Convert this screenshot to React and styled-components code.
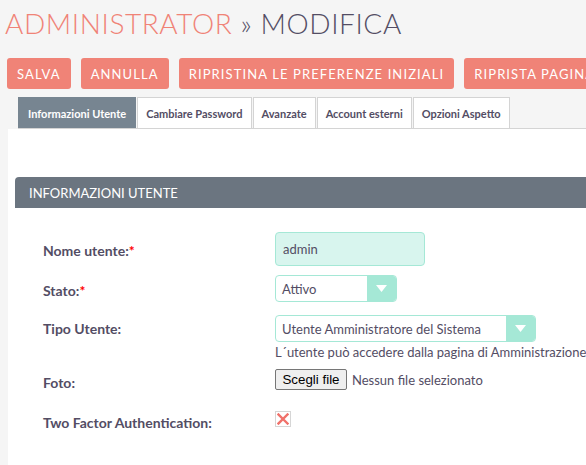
import React from "react";
import styled, { createGlobalStyle } from "styled-components";

const Global = createGlobalStyle`
  html, body { margin: 0; padding: 0; background: #f5f5f5; overflow: hidden; }
  body { font-family: Lato, "Open Sans", sans-serif; color: #534d64; }
`;

const Page = styled.div`
  width: 586px;
  height: 465px;
  display: flex;
  flex-direction: column;
  overflow: hidden;
`;

const Title = styled.h1`
  margin: 0;
  padding: 6px 0 0 5px;
  height: 52px;
  box-sizing: border-box;
  font-size: 28px;
  line-height: 34px;
  font-weight: 300;
  letter-spacing: 0.6px;
  white-space: nowrap;
  color: #534d64;
`;

const Module = styled.span`
  color: #f08377;
`;

const ButtonBar = styled.div`
  display: flex;
  gap: 10px;
  padding-left: 7px;
  height: 31px;
  margin-top: 6px;
`;

const ActionButton = styled.button`
  flex-shrink: 0;
  height: 31px;
  padding: 0 10px;
  border: none;
  border-radius: 3px;
  background: #f08377;
  color: #fff;
  font-family: Lato, sans-serif;
  font-size: 13px;
  letter-spacing: 1.1px;
  white-space: nowrap;
  text-transform: uppercase;
`;

const TabList = styled.div`
  display: flex;
  gap: 1px;
  margin: 8px 0 0 18px;
  height: 31px;
  border-bottom: 1px solid #d4d4d4;
`;

const Tab = styled.div`
  display: flex;
  align-items: center;
  padding: 0 ${(p) => (p.$active ? 9 : 8)}px;
  box-sizing: border-box;
  height: 31px;
  font-size: 11px;
  font-weight: 700;
  white-space: nowrap;
  background: ${(p) => (p.$active ? "#778591" : "#fff")};
  color: ${(p) => (p.$active ? "#fff" : "#534d64")};
  border: 1px solid ${(p) => (p.$active ? "#778591" : "#d4d4d4")};
  border-bottom: none;
`;

const Panel = styled.div`
  flex: 1;
  margin-left: 8px;
  background: #fff;
  padding-top: 48px;
`;

const PanelHeader = styled.div`
  margin-left: 7px;
  height: 31px;
  display: flex;
  align-items: center;
  padding-left: 14px;
  background: #6b7580;
  border-top-left-radius: 4px;
  color: #fff;
  font-size: 13px;
  white-space: nowrap;
`;

const Form = styled.div`
  padding: 24px 0 0 35px;
  display: flex;
  flex-direction: column;
`;

const Row = styled.div`
  display: grid;
  grid-template-columns: 232px auto;
  align-items: start;
  margin-top: ${(p) => p.$mt || 0}px;
`;

const Label = styled.div`
  padding-top: ${(p) => p.$pt}px;
  font-size: 14px;
  line-height: 16px;
  font-weight: 700;
  color: #534d64;
  white-space: nowrap;
`;

const Req = styled.span`
  color: #ff0000;
`;

const Value = styled.div`
  display: flex;
  flex-direction: column;
  white-space: nowrap;
`;

const TextInput = styled.div`
  width: 150px;
  height: 34px;
  box-sizing: border-box;
  padding-left: 7px;
  display: flex;
  align-items: center;
  background: #d8f5ee;
  border: 1px solid #a5e8d6;
  border-radius: 4px;
  font-size: 13px;
  color: #534d64;
`;

const Select = styled.div`
  width: ${(p) => p.$w}px;
  height: 27px;
  box-sizing: border-box;
  display: flex;
  border: 1px solid #a5e8d6;
  border-radius: 4px;
  overflow: hidden;
  background: #fff;
`;

const SelectText = styled.div`
  flex: 1;
  display: flex;
  align-items: center;
  padding-left: 6px;
  font-size: 13px;
  color: #534d64;
`;

const Arrow = styled.div`
  width: 29px;
  background: #a5e8d6;
  display: flex;
  align-items: center;
  justify-content: center;
`;

const Help = styled.div`
  font-size: 13px;
  line-height: 18px;
  margin-top: 1px;
  color: #534d64;
`;

const FileRow = styled.div`
  display: flex;
  align-items: center;
  gap: 5px;
  font-size: 13px;
  color: #534d64;
`;

const FileButton = styled.button`
  height: 21px;
  width: 72px;
  padding: 0;
  background: #efefef;
  border: 1px solid #767676;
  border-radius: 2px;
  font-family: "Liberation Sans", Arial, sans-serif;
  font-size: 13.33px;
  color: #000;
`;

const CheckBox = styled.div`
  width: 16px;
  height: 16px;
  box-sizing: border-box;
  border: 1px solid #d6d6d6;
  display: flex;
  align-items: center;
  justify-content: center;
  background: #fff;
`;

const Triangle = () => (
  <svg width="11" height="7" viewBox="0 0 11 7">
    <polygon points="0,0 11,0 5.5,7" fill="#fff" />
  </svg>
);

const Cross = () => (
  <svg width="12" height="12" viewBox="0 0 12 12">
    <path d="M1.5 1.5 L10.5 10.5 M10.5 1.5 L1.5 10.5" stroke="#f0716a" strokeWidth="2.4" strokeLinecap="square" />
  </svg>
);

export default function App() {
  return (
    <Page>
      <Global />
      <Title>
        <Module>ADMINISTRATOR</Module> » MODIFICA
      </Title>
      <ButtonBar>
        <ActionButton>Salva</ActionButton>
        <ActionButton>Annulla</ActionButton>
        <ActionButton>Ripristina le preferenze iniziali</ActionButton>
        <ActionButton>Riprista pagina iniziale</ActionButton>
      </ButtonBar>
      <TabList>
        <Tab $active>Informazioni Utente</Tab>
        <Tab>Cambiare Password</Tab>
        <Tab>Avanzate</Tab>
        <Tab>Account esterni</Tab>
        <Tab>Opzioni Aspetto</Tab>
      </TabList>
      <Panel>
        <PanelHeader>INFORMAZIONI UTENTE</PanelHeader>
        <Form>
          <Row>
            <Label $pt={11}>Nome utente:<Req>*</Req></Label>
            <Value>
              <TextInput>admin</TextInput>
            </Value>
          </Row>
          <Row $mt={9}>
            <Label $pt={8}>Stato:<Req>*</Req></Label>
            <Value>
              <Select $w={122}>
                <SelectText>Attivo</SelectText>
                <Arrow><Triangle /></Arrow>
              </Select>
            </Value>
          </Row>
          <Row $mt={13}>
            <Label $pt={6}>Tipo Utente:</Label>
            <Value>
              <Select $w={261}>
                <SelectText>Utente Amministratore del Sistema</SelectText>
                <Arrow><Triangle /></Arrow>
              </Select>
              <Help>L´utente può accedere dalla pagina di Amministrazione</Help>
            </Value>
          </Row>
          <Row $mt={8}>
            <Label $pt={6}>Foto:</Label>
            <Value>
              <FileRow>
                <FileButton>Scegli file</FileButton>
                <span>Nessun file selezionato</span>
              </FileRow>
            </Value>
          </Row>
          <Row $mt={20}>
            <Label $pt={4}>Two Factor Authentication:</Label>
            <Value>
              <CheckBox><Cross /></CheckBox>
            </Value>
          </Row>
        </Form>
      </Panel>
    </Page>
  );
}
